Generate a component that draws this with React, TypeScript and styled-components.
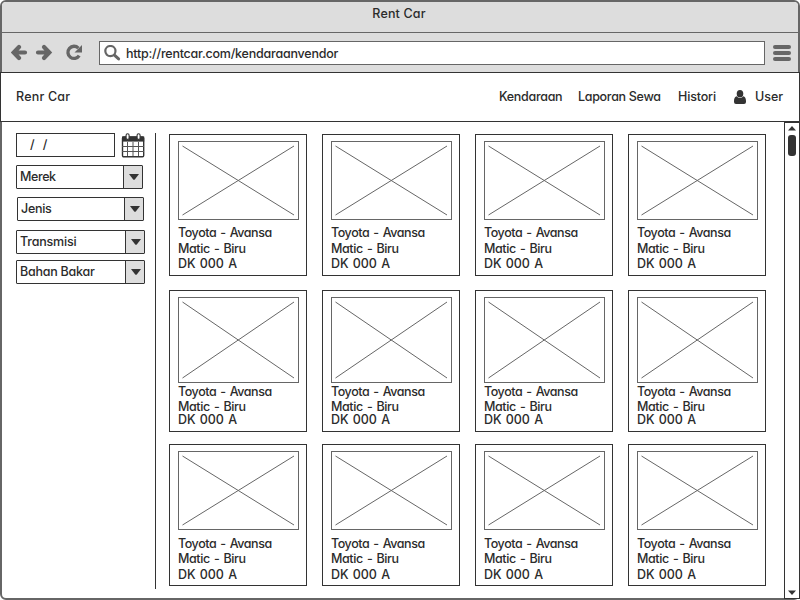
import React from "react";
import styled, { createGlobalStyle } from "styled-components";

const INK = "#333333";
const CHROME = "#666666";
const PANEL = "#dddddd";

const GlobalStyle = createGlobalStyle`
  * { box-sizing: border-box; }
  body { margin: 0; background: #fff; overflow: hidden; }
`;

const Window = styled.div`
  width: 800px;
  height: 600px;
  display: flex;
  flex-direction: column;
  background: #fff;
  border: 2px solid ${CHROME};
  border-radius: 6px;
  color: #2b2b2b;
  font-family: Inter, "Liberation Sans", sans-serif;
  font-feature-settings: "cv11" 1, "calt" 0;
  font-size: 12.5px;
  font-weight: 500;
  line-height: 16px;
  white-space: nowrap;
`;

const Text = styled.span<{ $spacing?: number }>`
  display: block;
  letter-spacing: ${(p) => p.$spacing ?? 0}px;
`;

const TitleBar = styled.div`
  height: 31px;
  flex: none;
  display: flex;
  justify-content: center;
  padding: 4px 2px 0 0;
  background: ${PANEL};
  border-bottom: 1px solid ${CHROME};
  border-radius: 4px 4px 0 0;
`;

const Toolbar = styled.div`
  height: 39px;
  flex: none;
  display: flex;
  align-items: flex-start;
  padding: 8px 7px 0 9px;
  background: ${PANEL};
`;

const NavIcons = styled.svg`
  display: block;
  flex: none;
  margin-right: 16px;
`;

const AddressBar = styled.div`
  width: 666px;
  height: 24px;
  display: flex;
  align-items: flex-start;
  gap: 5px;
  padding: 3px 0 0 4px;
  border: 1px solid ${CHROME};
  background: #fff;
`;

const Address = styled(Text)`
  padding-top: 1px;
`;

const MenuButton = styled.div`
  width: 18px;
  margin: 4px 0 0 8px;
  display: flex;
  flex-direction: column;
  gap: 2px;
`;

const MenuLine = styled.span`
  height: 4px;
  border-radius: 2px;
  background: ${CHROME};
`;

const Header = styled.header`
  height: 50px;
  flex: none;
  margin: 0 -2px;
  padding: 0 15px 1px 15px;
  display: flex;
  align-items: center;
  justify-content: space-between;
  border: 1px solid ${INK};
  background: #fff;
`;

const Nav = styled.nav`
  display: grid;
  grid-template-columns: 79px 100px 56px 21px 29px;
  align-items: center;
`;

const UserGlyph = styled.svg`
  display: block;
  margin-top: 1px;
`;

const Body = styled.main`
  flex: 1;
  min-height: 0;
  display: flex;
  margin: 0 -2px -2px 0;
`;

const Sidebar = styled.aside`
  width: 154px;
  height: 456px;
  margin-top: 11px;
  padding-left: 14px;
  flex: none;
  border-right: 1px solid ${INK};
`;

const DateRow = styled.div`
  display: flex;
  gap: 6px;
  height: 25px;
`;

const DateField = styled.div`
  width: 99px;
  height: 24px;
  padding: 3px 0 0 13px;
  border: 1px solid ${INK};
  display: flex;
  gap: 8px;
`;

const Select = styled.div<{ $top: number; $left?: number; $width: number }>`
  display: flex;
  justify-content: space-between;
  width: ${(p) => p.$width}px;
  height: 24px;
  margin: ${(p) => p.$top}px 0 0 ${(p) => p.$left ?? 0}px;
  padding-left: 3px;
  border: 1px solid ${INK};
  border-radius: 1px;
  line-height: 21px;
`;

const SelectArrow = styled.span`
  width: 19px;
  display: flex;
  align-items: center;
  justify-content: center;
  padding-left: 1px;
  border-left: 1px solid ${INK};
  background: ${PANEL};
`;

const Gallery = styled.div`
  width: 628px;
  padding: 12px 0 0 13px;
`;

const CardRow = styled.div<{ $gap: number }>`
  display: grid;
  grid-template-columns: repeat(4, 138px);
  column-gap: 15px;
  margin-bottom: ${(p) => p.$gap}px;
`;

const Card = styled.article`
  height: 142px;
  padding: 6px 8px 0;
  border: 1px solid ${INK};
`;

const Picture = styled.svg`
  display: block;
`;

const Line = styled.div<{ $height: number; $top?: number; $spacing: number }>`
  height: ${(p) => p.$height}px;
  margin-top: ${(p) => p.$top ?? 0}px;
  letter-spacing: ${(p) => p.$spacing}px;
  word-spacing: 1.2px;
`;

const Scrollbar = styled.div`
  width: 16px;
  height: 477px;
  display: flex;
  flex-direction: column;
  align-items: center;
  padding: 3px 0;
  border: 1px solid ${INK};
  background: #fff;
`;

const Thumb = styled.div`
  width: 8px;
  height: 21px;
  margin: 4px 0 auto;
  border-radius: 3px;
  background: ${INK};
`;

function NavigationIcons() {
  return (
    <NavIcons width="72" height="24" viewBox="0 0 72 24" fill="none" stroke={CHROME}>
      <path d="M3 11.5H14M8 6L2.7 11.5L8 17" strokeWidth="4.2" strokeLinecap="round" strokeLinejoin="miter" />
      <path d="M27 11.5H38M33 6L38.3 11.5L33 17" strokeWidth="4.2" strokeLinecap="round" strokeLinejoin="miter" />
      <path d="M67.4 7.1A6.1 6.1 0 1 0 68.2 14.6" strokeWidth="3.3" />
      <path d="M71 4V11.5H63.5Z" fill={CHROME} stroke="none" />
    </NavIcons>
  );
}

function SearchIcon() {
  return (
    <svg width="17" height="17" viewBox="0 0 17 17" fill="none" stroke={CHROME}>
      <circle cx="6.4" cy="6.1" r="5.1" strokeWidth="2.2" />
      <path d="M10.7 10.4L14.6 13.9" strokeWidth="3" strokeLinecap="round" />
    </svg>
  );
}

function UserIcon() {
  return (
    <UserGlyph width="12" height="14" viewBox="0 0 12 14" fill={INK}>
      <ellipse cx="6" cy="3.8" rx="3.3" ry="3.8" />
      <path d="M2.8 6.3C1 6.6 0 8.4 0 11V12Q0 14 2 14H10Q12 14 12 12V11C12 8.4 11 6.6 9.2 6.3C7.7 8.7 4.3 8.7 2.8 6.3Z" />
    </UserGlyph>
  );
}

function CalendarIcon() {
  return (
    <svg width="24" height="25" viewBox="0 0 24 25">
      <rect x="1.5" y="4" width="21.2" height="19.8" rx="1.2" fill="#fff" stroke={INK} strokeWidth="1.4" />
      <path d="M1 3.5H23.2V8.6H1Z" fill={INK} />
      <path d="M6.5 9V23M12 9V23M17.5 9V23M1 13.5H23M1 18.5H23" stroke="#555" fill="none" />
      <rect x="5.1" y="0.8" width="3" height="5.6" rx="1.5" fill="#fff" stroke={INK} strokeWidth="1.1" />
      <rect x="16.1" y="0.8" width="3" height="5.6" rx="1.5" fill="#fff" stroke={INK} strokeWidth="1.1" />
    </svg>
  );
}

function Dropdown(props: { label: string; top: number; left?: number; width: number; spacing: number }) {
  return (
    <Select $top={props.top} $left={props.left} $width={props.width}>
      <Text $spacing={props.spacing}>{props.label}</Text>
      <SelectArrow>
        <svg width="10" height="6" viewBox="0 0 10 6">
          <path d="M0 0H10L6 5.3Q5 6.3 4 5.3Z" fill={INK} />
        </svg>
      </SelectArrow>
    </Select>
  );
}

interface RowLayout {
  gap: number;
  image: number;
  top: number;
  lines: [number, number, number];
}

const rows: RowLayout[] = [
  { gap: 14, image: 79, top: 5, lines: [16, 15, 16] },
  { gap: 12, image: 86, top: 1, lines: [15, 13, 16] },
  { gap: 0, image: 79, top: 6, lines: [15, 16, 16] },
];

function VehicleCard({ row }: { row: RowLayout }) {
  const h = row.image;
  return (
    <Card>
      <Picture width="121" height={h} viewBox={`0 0 121 ${h}`} fill="none" stroke={CHROME}>
        <rect x="0.5" y="0.5" width="120" height={h - 1} />
        <path d={`M4.5 5L116 ${h - 5}M116 5L4.5 ${h - 5}`} />
      </Picture>
      <Line $height={row.lines[0]} $top={row.top} $spacing={-0.44}>Toyota - Avansa</Line>
      <Line $height={row.lines[1]} $spacing={-0.4}>Matic - Biru</Line>
      <Line $height={row.lines[2]} $spacing={-0.1}>DK 000 A</Line>
    </Card>
  );
}

export default function App() {
  return (
    <>
      <GlobalStyle />
      <Window>
        <TitleBar><Text $spacing={0.15}>Rent Car</Text></TitleBar>
        <Toolbar>
          <NavigationIcons />
          <AddressBar>
            <SearchIcon />
            <Address $spacing={-0.22}>http://rentcar.com/kendaraanvendor</Address>
          </AddressBar>
          <MenuButton><MenuLine /><MenuLine /><MenuLine /></MenuButton>
        </Toolbar>
        <Header>
          <Text $spacing={0.2}>Renr Car</Text>
          <Nav>
            <Text $spacing={-0.3}>Kendaraan</Text>
            <Text $spacing={-0.3}>Laporan Sewa</Text>
            <Text $spacing={-0.15}>Histori</Text>
            <UserIcon />
            <Text>User</Text>
          </Nav>
        </Header>
        <Body>
          <Sidebar>
            <DateRow>
              <DateField><span>/</span><span>/</span></DateField>
              <CalendarIcon />
            </DateRow>
            <Dropdown label="Merek" top={7} width={127} spacing={-0.4} />
            <Dropdown label="Jenis" top={8} left={1} width={127} spacing={-0.3} />
            <Dropdown label="Transmisi" top={9} width={129} spacing={-0.2} />
            <Dropdown label="Bahan Bakar" top={6} width={129} spacing={-0.25} />
          </Sidebar>
          <Gallery>
            {rows.map((row, r) => (
              <CardRow key={r} $gap={row.gap}>
                {[0, 1, 2, 3].map((c) => <VehicleCard key={c} row={row} />)}
              </CardRow>
            ))}
          </Gallery>
          <Scrollbar>
            <svg width="8" height="5" viewBox="0 0 8 5"><path d="M0 4.5L4 0L8 4.5Z" fill={INK} /></svg>
            <Thumb />
            <svg width="8" height="5" viewBox="0 0 8 5"><path d="M0 0.5L4 5L8 0.5Z" fill={INK} /></svg>
          </Scrollbar>
        </Body>
      </Window>
    </>
  );
}
